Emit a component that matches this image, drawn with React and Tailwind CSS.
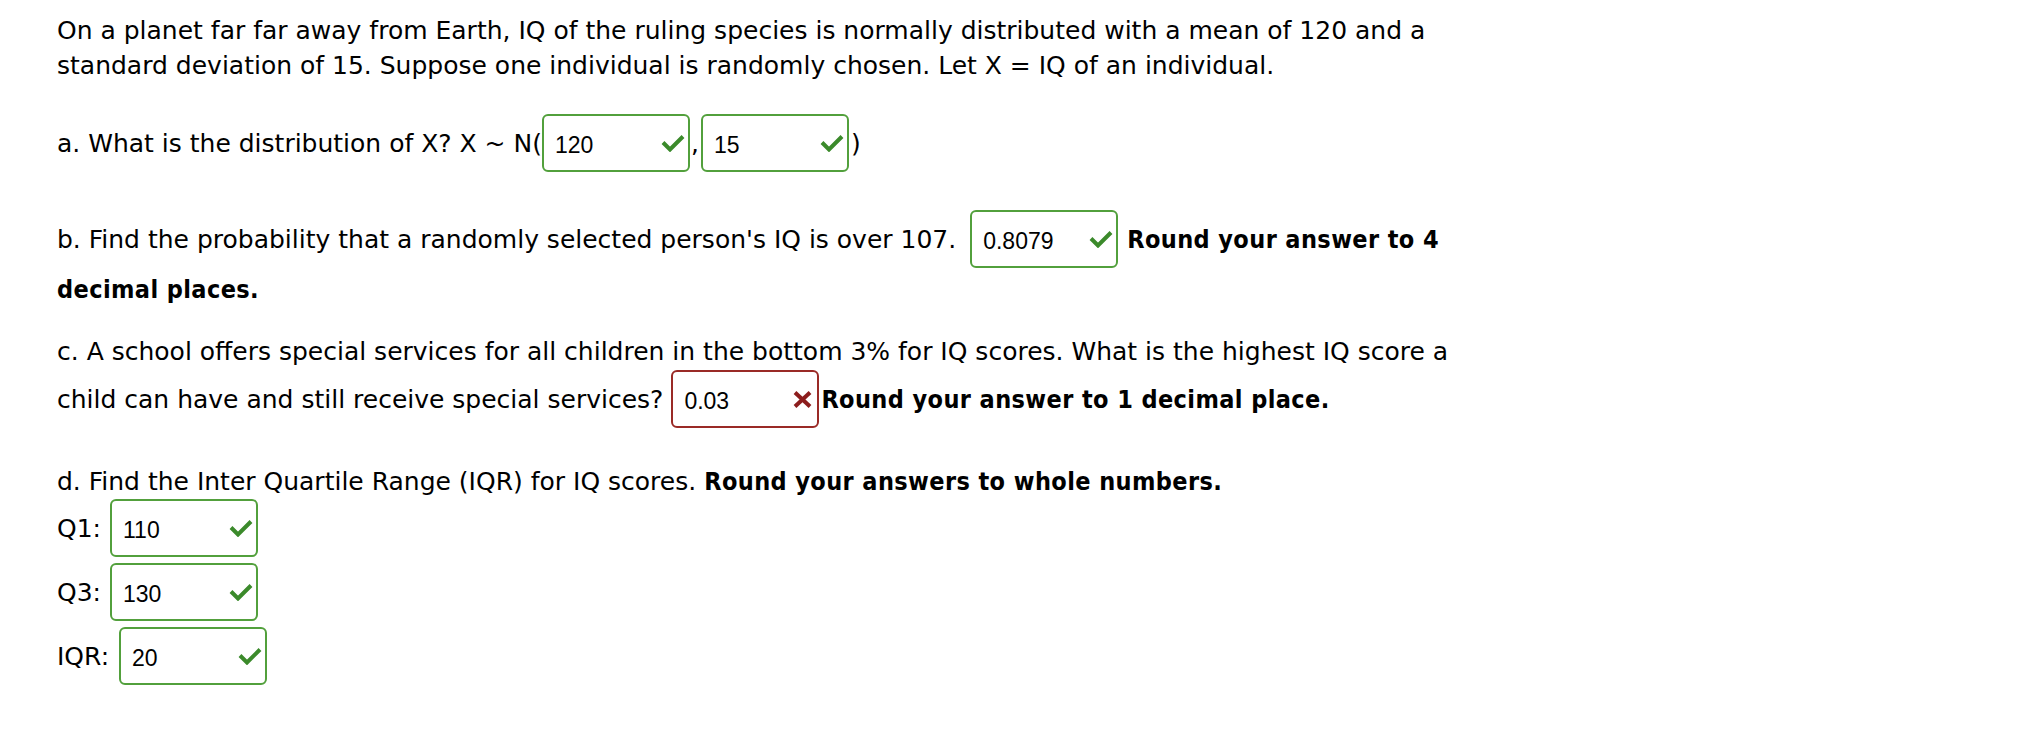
import React from "react";

function Check() {
  return (
    <svg width="24" height="18" viewBox="0 0 24 18" className="shrink-0">
      <polyline points="2,8.5 9,15.5 22,2.5" fill="none" stroke="#3b8a2b" strokeWidth="4" strokeLinejoin="miter" />
    </svg>
  );
}

function Cross() {
  return (
    <svg width="19" height="17" viewBox="0 0 19 17" className="shrink-0">
      <line x1="2" y1="1.5" x2="17" y2="15.5" stroke="#8c1d1d" strokeWidth="4" />
      <line x1="17" y1="1.5" x2="2" y2="15.5" stroke="#8c1d1d" strokeWidth="4" />
    </svg>
  );
}

function Box({ value, ok = true, className = "" }) {
  return (
    <span
      className={
        "flex shrink-0 items-center justify-between w-[148px] h-[58px] border-2 rounded-[6px] pl-[11px] " +
        (ok ? "border-[#52a03c] pr-[3px] " : "border-[#9a2a26] pr-[5px] ") +
        className
      }
    >
      <span className="mt-[3px] font-['Liberation_Sans',Arial,sans-serif] text-[23px] leading-[26px] text-black">
        {value}
      </span>
      {ok ? <Check /> : <Cross />}
    </span>
  );
}

function B({ children, className = "" }) {
  return (
    <span className={"font-['DejaVu_Sans_Condensed','DejaVu_Sans',sans-serif] font-bold tracking-[0.4px] " + className}>
      {children}
    </span>
  );
}

export default function App() {
  return (
    <div className="min-h-[738px] w-full bg-white pl-[57px] pt-[13px] text-black font-['DejaVu_Sans',sans-serif] text-[25px] leading-[35px] whitespace-nowrap">
      <div>On a planet far far away from Earth, IQ of the ruling species is normally distributed with a mean of 120 and a</div>
      <div>standard deviation of 15. Suppose one individual is randomly chosen. Let X = IQ of an individual.</div>

      <div className="mt-[31px] flex h-[58px] items-center">
        <span>a. What is the distribution of X? X ~ N(</span>
        <Box value="120" className="ml-0 mr-[1px]" />
        <span>,</span>
        <Box value="15" className="ml-[2px] mr-[2px]" />
        <span>)</span>
      </div>

      <div className="mt-[38px] flex h-[58px] items-center">
        <span>b. Find the probability that a randomly selected person's IQ is over 107.</span>
        <Box value="0.8079" className="ml-[14px] mr-[9px]" />
        <B>Round your answer to 4</B>
      </div>
      <div className="mt-[4px]">
        <B>decimal places.</B>
      </div>

      <div className="mt-[27px]">c. A school offers special services for all children in the bottom 3% for IQ scores. What is the highest IQ score a</div>
      <div className="mt-[1px] flex h-[58px] items-center">
        <span>child can have and still receive special services?</span>
        <Box value="0.03" ok={false} className="ml-[8px] mr-[2px]" />
        <B>Round your answer to 1 decimal place.</B>
      </div>

      <div className="mt-[36px]">
        d. Find the Inter Quartile Range (IQR) for IQ scores. <B>Round your answers to whole numbers.</B>
      </div>
      <div className="mt-0 flex h-[58px] items-center">
        <span>Q1:</span>
        <Box value="110" className="ml-[9px]" />
      </div>
      <div className="mt-[6px] flex h-[58px] items-center">
        <span>Q3:</span>
        <Box value="130" className="ml-[9px]" />
      </div>
      <div className="mt-[6px] flex h-[58px] items-center">
        <span>IQR:</span>
        <Box value="20" className="ml-[10px]" />
      </div>
    </div>
  );
}
